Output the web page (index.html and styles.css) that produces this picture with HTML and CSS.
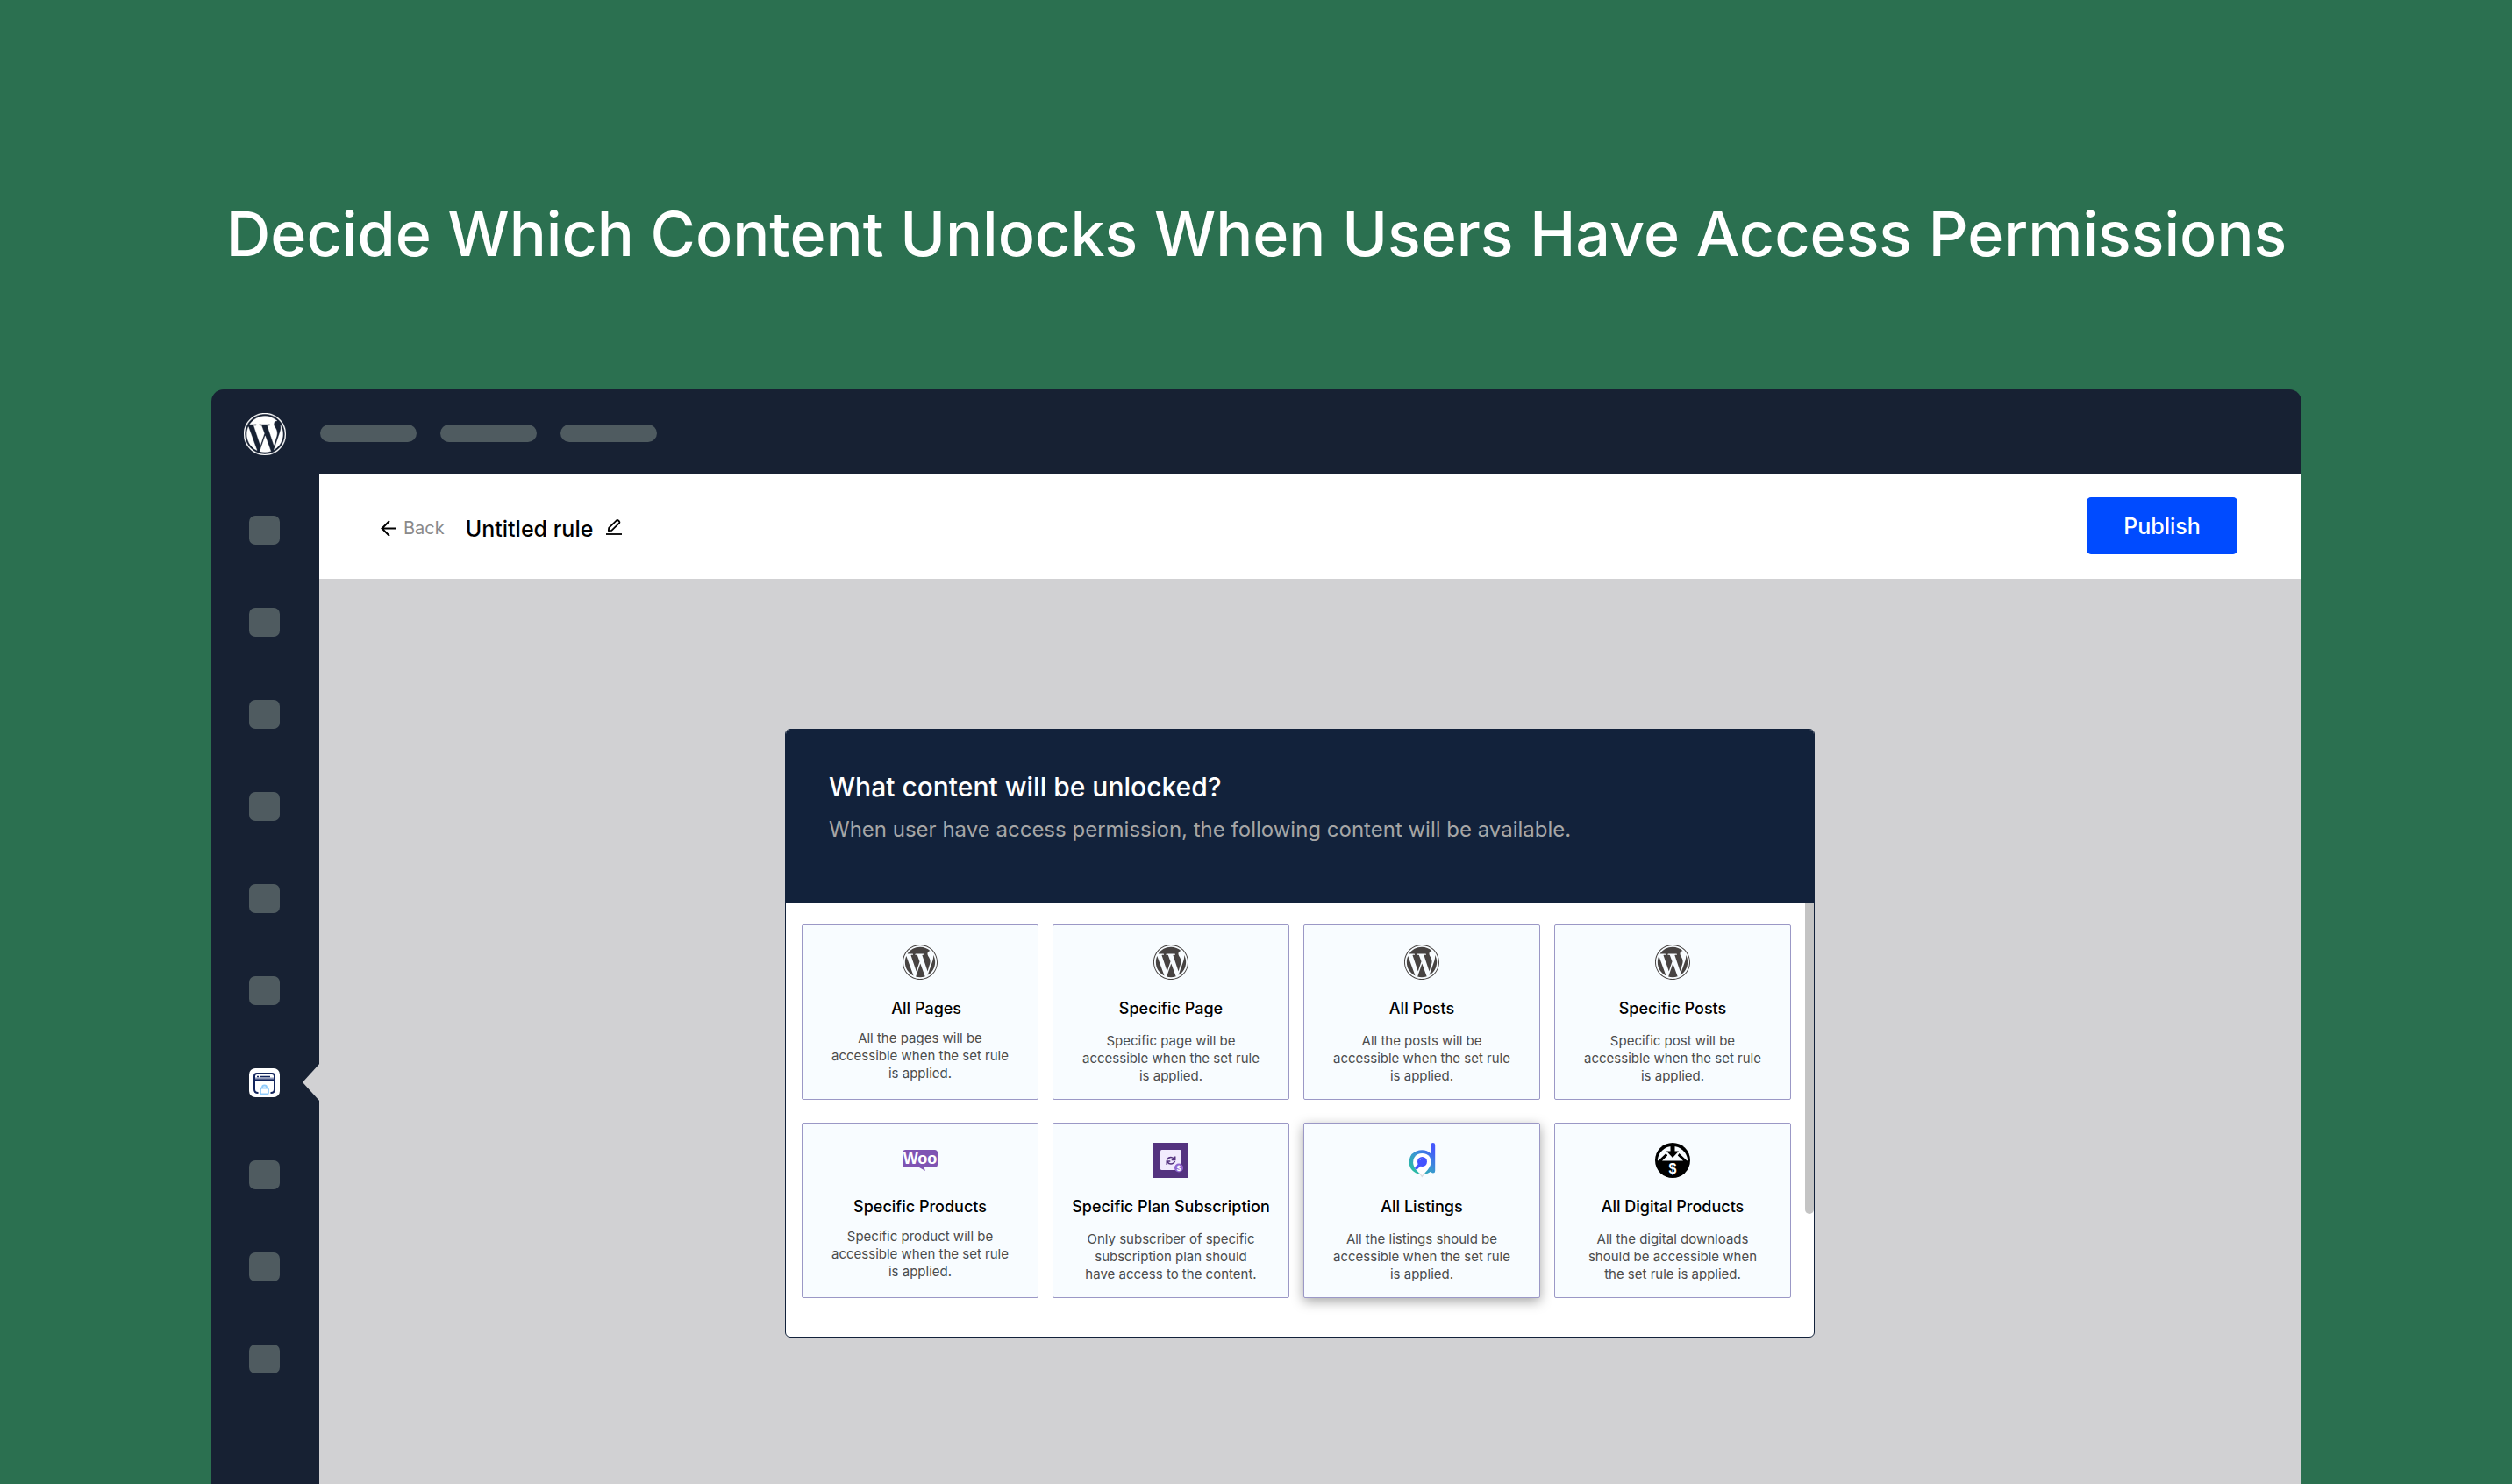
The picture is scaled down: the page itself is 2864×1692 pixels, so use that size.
FILE: index.html
```html
<!DOCTYPE html>
<html lang="en">
<head>
<meta charset="utf-8">
<meta name="viewport" content="width=device-width, initial-scale=1">
<title>Untitled rule</title>
<link rel="stylesheet" href="styles.css">
</head>
<body>
<svg class="sprite" aria-hidden="true">
  <symbol id="wordpress" viewBox="8 8 496 496">
    <path fill="currentColor" d="M61.7 169.4l101.5 278C92.2 413 43.3 340.2 43.3 256c0-30.9 6.6-60.1 18.4-86.6zm337.9 75.9c0-26.3-9.4-44.5-17.5-58.7-10.8-17.5-20.9-32.4-20.9-49.9 0-19.6 14.8-37.8 35.7-37.8.9 0 1.8.1 2.8.2-37.9-34.7-88.3-55.9-143.7-55.9-74.3 0-139.7 38.1-177.8 95.9 5 .2 9.7.3 13.7.3 22.2 0 56.7-2.7 56.7-2.7 11.5-.7 12.8 16.2 1.4 17.5 0 0-11.5 1.3-24.3 2l77.5 230.4L249.8 247l-33.1-90.8c-11.5-.7-22.3-2-22.3-2-11.5-.7-10.1-18.2 1.3-17.5 0 0 35.1 2.7 56 2.7 22.2 0 56.7-2.7 56.7-2.7 11.5-.7 12.8 16.2 1.4 17.5 0 0-11.5 1.3-24.3 2l76.9 228.7 21.2-70.9c9-29.4 16-50.5 16-68.7zm-139.9 29.3l-63.8 185.5c19.1 5.6 39.2 8.7 60.1 8.7 24.8 0 48.5-4.3 70.6-12.1-.6-.9-1.1-1.9-1.5-2.9l-65.4-179.2zm183-120.7c.9 6.8 1.4 14 1.4 21.9 0 21.6-4 45.8-16.2 76.2l-65 187.9C426.2 403 468.7 334.5 468.7 256c0-37-9.4-71.8-26-102.1zM504 256c0 136.8-111.3 248-248 248C119.2 504 8 392.7 8 256 8 119.2 119.2 8 256 8c136.7 0 248 111.2 248 248zm-11.4 0c0-130.5-106.2-236.6-236.6-236.6C125.5 19.4 19.4 125.6 19.4 256S125.6 492.6 256 492.6c130.5 0 236.6-106.1 236.6-236.6z"/>
  </symbol>
</svg>

<h1 class="headline">Decide Which Content Unlocks When Users Have Access Permissions</h1>

<div class="window">
  <header class="topbar">
    <svg class="topbar-logo" role="img" aria-label="WordPress"><use href="#wordpress"/></svg>
    <div class="topbar-pills">
      <span class="pill"></span>
      <span class="pill"></span>
      <span class="pill"></span>
    </div>
  </header>

  <nav class="sidebar" aria-label="Admin menu">
    <span class="menu-item"></span>
    <span class="menu-item"></span>
    <span class="menu-item"></span>
    <span class="menu-item"></span>
    <span class="menu-item"></span>
    <span class="menu-item"></span>
    <a class="menu-item menu-item--active" href="#" aria-label="Content rules">
      <svg class="menu-icon" viewBox="0 0 35 33">
        <g fill="none" stroke="#12245c" stroke-width="2">
          <path d="M10.500 28H10Q6 28 6 24V9Q6 6 9 6H26Q29 6 29 9V24Q29 28 25 28H24.500"/>
          <path d="M6 13H29"/>
        </g>
        <path fill="#8f98b8" d="M7 10.500H28V12.500H7z"/>
        <path stroke="#12245c" stroke-width="1.500" d="M9 9.500H11M13 9.500H24"/>
        <g fill="none" stroke="#8fcbfb" stroke-width="1.800">
          <rect x="13" y="22.500" width="9" height="7" rx="1.500"/>
          <path d="M15 22V21.500Q15 19.500 17.500 19.500T20 21.500V22"/>
        </g>
      </svg>
    </a>
    <span class="menu-item"></span>
    <span class="menu-item"></span>
    <span class="menu-item"></span>
  </nav>

  <main class="workspace">
    <div class="rulebar">
      <a class="back" href="#">
        <svg class="rule-icon" viewBox="0 0 18 18" fill="none" stroke="#000" stroke-width="2"><path d="M17.500 9.500H2M10 1L1.500 9.500L10 18"/></svg>
        Back
      </a>
      <h2 class="rule-title">Untitled rule</h2>
      <button class="edit" type="button" aria-label="Rename rule">
        <svg class="rule-icon" viewBox="0 0 18 18" fill="none" stroke="#000" stroke-width="1.800" stroke-linejoin="round"><path d="M0 17H18"/><path d="M2.800 13.200L3.200 9.800L12 1.300Q13 .6 14 1.500L15 2.500Q15.800 3.400 15 4.400L6.300 12.800Z"/></svg>
      </button>
      <button class="publish" type="button">Publish</button>
    </div>

    <div class="stage">
      <section class="panel" aria-labelledby="panel-title">
        <div class="panel-head">
          <h3 class="panel-title" id="panel-title">What content will be unlocked?</h3>
          <p class="panel-sub">When user have access permission, the following content will be available.</p>
        </div>
        <div class="panel-body">
          <div class="cards">
            <button class="card card--tight" type="button">
              <svg class="card-icon"><use href="#wordpress"/></svg>
              <span class="card-title">&nbsp;&nbsp;&nbsp;All Pages</span>
              <span class="card-text">All the pages will be<br>accessible when the set rule<br>is applied.</span>
            </button>
            <button class="card" type="button">
              <svg class="card-icon"><use href="#wordpress"/></svg>
              <span class="card-title">Specific Page</span>
              <span class="card-text">Specific page will be<br>accessible when the set rule<br>is applied.</span>
            </button>
            <button class="card" type="button">
              <svg class="card-icon"><use href="#wordpress"/></svg>
              <span class="card-title">All Posts</span>
              <span class="card-text">All the posts will be<br>accessible when the set rule<br>is applied.</span>
            </button>
            <button class="card" type="button">
              <svg class="card-icon"><use href="#wordpress"/></svg>
              <span class="card-title">Specific Posts</span>
              <span class="card-text">Specific post will be<br>accessible when the set rule<br>is applied.</span>
            </button>
            <button class="card card--tight" type="button">
              <svg class="card-icon" viewBox="0 0 40 40">
                <path fill="#7f54b3" d="M3.500 8H36.500Q40 8 40 11.500V24.500Q40 28 36.500 28H24.500L26 32L19 28H3.500Q0 28 0 24.500V11.500Q0 8 3.500 8z"/>
                <text class="woo" x="20" y="24" text-anchor="middle">Woo</text>
              </svg>
              <span class="card-title">Specific Products</span>
              <span class="card-text">Specific product will be<br>accessible when the set rule<br>is applied.</span>
            </button>
            <button class="card" type="button">
              <svg class="card-icon" viewBox="0 0 40 40">
                <path fill="#54337f" d="M0 0H40V40H0z"/>
                <rect x="8" y="8" width="24" height="23" rx="1.500" fill="#f1ebfd"/>
                <g fill="none" stroke="#54337f" stroke-width="1.600">
                  <path d="M15.500 19.500Q17 16.500 20 16.500Q22.500 16.500 24 18.800M24.700 15.500V19.500H20.700"/>
                  <path d="M24.500 21Q23 24 20 24Q17.500 24 16 21.700M15.300 25V21H19.300"/>
                </g>
                <circle cx="29" cy="28.500" r="5" fill="#9166cf"/>
                <text class="coin" x="29" y="32" text-anchor="middle">$</text>
              </svg>
              <span class="card-title">Specific Plan Subscription</span>
              <span class="card-text">Only subscriber of specific<br>subscription plan should<br>have access to the content.</span>
            </button>
            <button class="card card--raised" type="button">
              <svg class="card-icon" viewBox="0 0 40 40">
                <defs>
                  <linearGradient id="d-fill" gradientUnits="userSpaceOnUse" x1="8" y1="32" x2="32" y2="6">
                    <stop offset="0" stop-color="#29c0a0"/>
                    <stop offset=".5" stop-color="#3a94d4"/>
                    <stop offset="1" stop-color="#4458fb"/>
                  </linearGradient>
                </defs>
                <path fill="url(#d-fill)" d="M30.500 2.200Q30.500 0 32.800 0T35.200 2.200V32Q35.200 34.500 32.800 34.500Q31 34.500 30.500 32.500Q26 36 20 36Q12 35.500 8 30Q5 25.500 5.500 20.500Q7 10.500 17 8.500Q25 7 30.500 12.500z"/>
                <path fill="#fff" d="M20.300 12Q26 12 29 16Q31.500 20.500 30 25Q28 31 20.300 37Q12 31 10.500 25Q9.300 20 12 16Q15 12 20.300 12z"/>
                <path fill="#dcdde1" d="M16 33.500L20.300 37L24.600 33.500L20.300 39.500z"/>
                <path stroke="#4353ff" stroke-width="3.500" stroke-linecap="round" d="M14 28.500L18 24.500"/>
                <circle cx="20.500" cy="21.500" r="5.500" fill="#4353ff"/>
                <path fill="none" stroke="#8d97ff" d="M17.800 20Q18.500 18 20.800 18"/>
              </svg>
              <span class="card-title">All Listings</span>
              <span class="card-text">All the listings should be<br>accessible when the set rule<br>is applied.</span>
            </button>
            <button class="card" type="button">
              <svg class="card-icon" viewBox="0 0 40 40">
                <circle cx="20" cy="20" r="20" fill="#000"/>
                <path fill="#f8fcff" d="M2.800 19.500A17.300 17.300 0 0 1 37.200 19.500L36.500 20.500L27.500 12L25.800 14.500L32 20.500H8L14.200 14.500L12.500 12L3.500 20.500z"/>
                <path d="M17.500 4H22.500V9.500H27L20 17L13 9.500H17.500z"/>
                <text class="dollar" x="20" y="35" text-anchor="middle">$</text>
              </svg>
              <span class="card-title">All Digital Products</span>
              <span class="card-text">All the digital downloads<br>should be accessible when<br>the set rule is applied.</span>
            </button>
          </div>
          <div class="scrollbar"></div>
        </div>
      </section>
    </div>
  </main>
</div>
</body>
</html>
```
FILE: styles.css
```css
* {
  box-sizing: border-box;
}

body {
  margin: 0;
  min-height: 100vh;
  padding: 0 240px 0 241px;
  display: flex;
  flex-direction: column;
  background: #2b7050;
  color: #000;
  font-family: Inter, "Liberation Sans", sans-serif;
}

h1, h2, h3, p {
  margin: 0;
}

button {
  border: 0;
  padding: 0;
  background: none;
  color: inherit;
  font: inherit;
  cursor: pointer;
}

.sprite {
  display: none;
}

.headline {
  padding: 223px 0 133px;
  color: #fff;
  font-size: 70px;
  line-height: 88px;
  font-weight: 500;
  text-align: center;
}

/* Browser-like window */

.window {
  flex: 1;
  display: grid;
  grid-template-columns: 123px 1fr;
  grid-template-rows: 97px 1fr;
  overflow: hidden;
  border-radius: 14px 14px 0 0;
  background: #172133;
}

.topbar {
  grid-column: 1 / -1;
  display: flex;
  align-items: center;
  gap: 39px;
  padding: 4px 37px 0;
}

.topbar-logo {
  width: 48px;
  height: 48px;
  color: #fff;
  stroke: #fff;
  stroke-width: 4px;
}

.topbar-pills {
  display: flex;
  gap: 27px;
  padding-bottom: 2px;
}

.pill {
  width: 110px;
  height: 20px;
  border-radius: 10px;
  background: #4f5b60;
}

.sidebar {
  display: flex;
  flex-direction: column;
  align-items: center;
  gap: 72px;
  padding: 47px 2px 0 0;
}

.menu-item {
  position: relative;
  width: 35px;
  height: 33px;
  border-radius: 7px;
  background: #4f5b60;
}

.menu-item--active {
  background: #fff;
}

.menu-item--active::after {
  content: "";
  position: absolute;
  top: -6px;
  left: 61px;
  border: solid transparent;
  border-width: 22px 20px 22px 0;
  border-right-color: #d1d1d3;
}

.menu-icon {
  display: block;
  width: 35px;
  height: 33px;
}

.workspace {
  display: flex;
  flex-direction: column;
  background: #d1d1d3;
}

.rulebar {
  display: flex;
  align-items: center;
  height: 119px;
  padding: 0 73px 0 70px;
  background: #fff;
}

.back {
  display: flex;
  align-items: center;
  gap: 8px;
  margin-right: 24px;
  padding-top: 2px;
  color: #8a8a8a;
  font-size: 20px;
  line-height: 24px;
  text-decoration: none;
}

.rule-icon {
  display: block;
  width: 18px;
  height: 18px;
}

.rule-title {
  padding-top: 4px;
  font-size: 25px;
  line-height: 30px;
  font-weight: 500;
}

.edit {
  margin-left: 15px;
}

.publish {
  margin: 0 0 2px auto;
  width: 172px;
  height: 65px;
  border-radius: 5px;
  background: #004bff;
  color: #fff;
  font-size: 25px;
  line-height: 30px;
  font-weight: 500;
}

/* Content picker */

.stage {
  display: flex;
  justify-content: center;
  padding: 171px 24px 120px 0;
}

.panel {
  width: 100%;
  max-width: 1174px;
  overflow: hidden;
  border: 1px solid #12223b;
  border-radius: 6px;
  background: #fff;
}

.panel-head {
  padding: 47px 49px 68px;
  background: #12223b;
}

.panel-title {
  color: #fff;
  font-size: 30px;
  line-height: 36px;
  font-weight: 500;
}

.panel-sub {
  padding-top: 16px;
  color: #a6a6a6;
  font-size: 24px;
  line-height: 30px;
}

.panel-body {
  display: flex;
  align-items: flex-start;
  gap: 16px;
  padding-left: 18px;
}

.cards {
  flex: 1;
  display: grid;
  grid-template-columns: repeat(4, 1fr);
  gap: 26px 16px;
  padding: 25px 0 44px;
}

.card {
  display: flex;
  flex-direction: column;
  align-items: center;
  height: 200px;
  padding-top: 22px;
  border: 1px solid #9b98c6;
  border-radius: 2px;
  background: #f8fcff;
  text-align: center;
}

.card--raised {
  box-shadow: 0 4px 14px rgba(0, 0, 0, .35);
}

.card-icon {
  width: 40px;
  height: 40px;
  color: #474342;
}

.card-title {
  padding-top: 22px;
  font-size: 18px;
  line-height: 22px;
  font-weight: 500;
}

.card-text {
  padding-top: 16px;
  color: #4c4c4c;
  font-size: 15px;
  line-height: 20px;
}

.card--tight .card-text {
  padding-top: 13px;
}

.scrollbar {
  width: 10px;
  height: 355px;
  border-radius: 0 0 5px 5px;
  background: #c4c4c4;
}

.woo,
.coin,
.dollar {
  fill: #fff;
  font-family: "Liberation Sans Narrow", "Liberation Sans", sans-serif;
  font-weight: 700;
}

.woo {
  font-size: 18px;
}

.coin {
  font-size: 9px;
}

.dollar {
  font-size: 16px;
}
```
